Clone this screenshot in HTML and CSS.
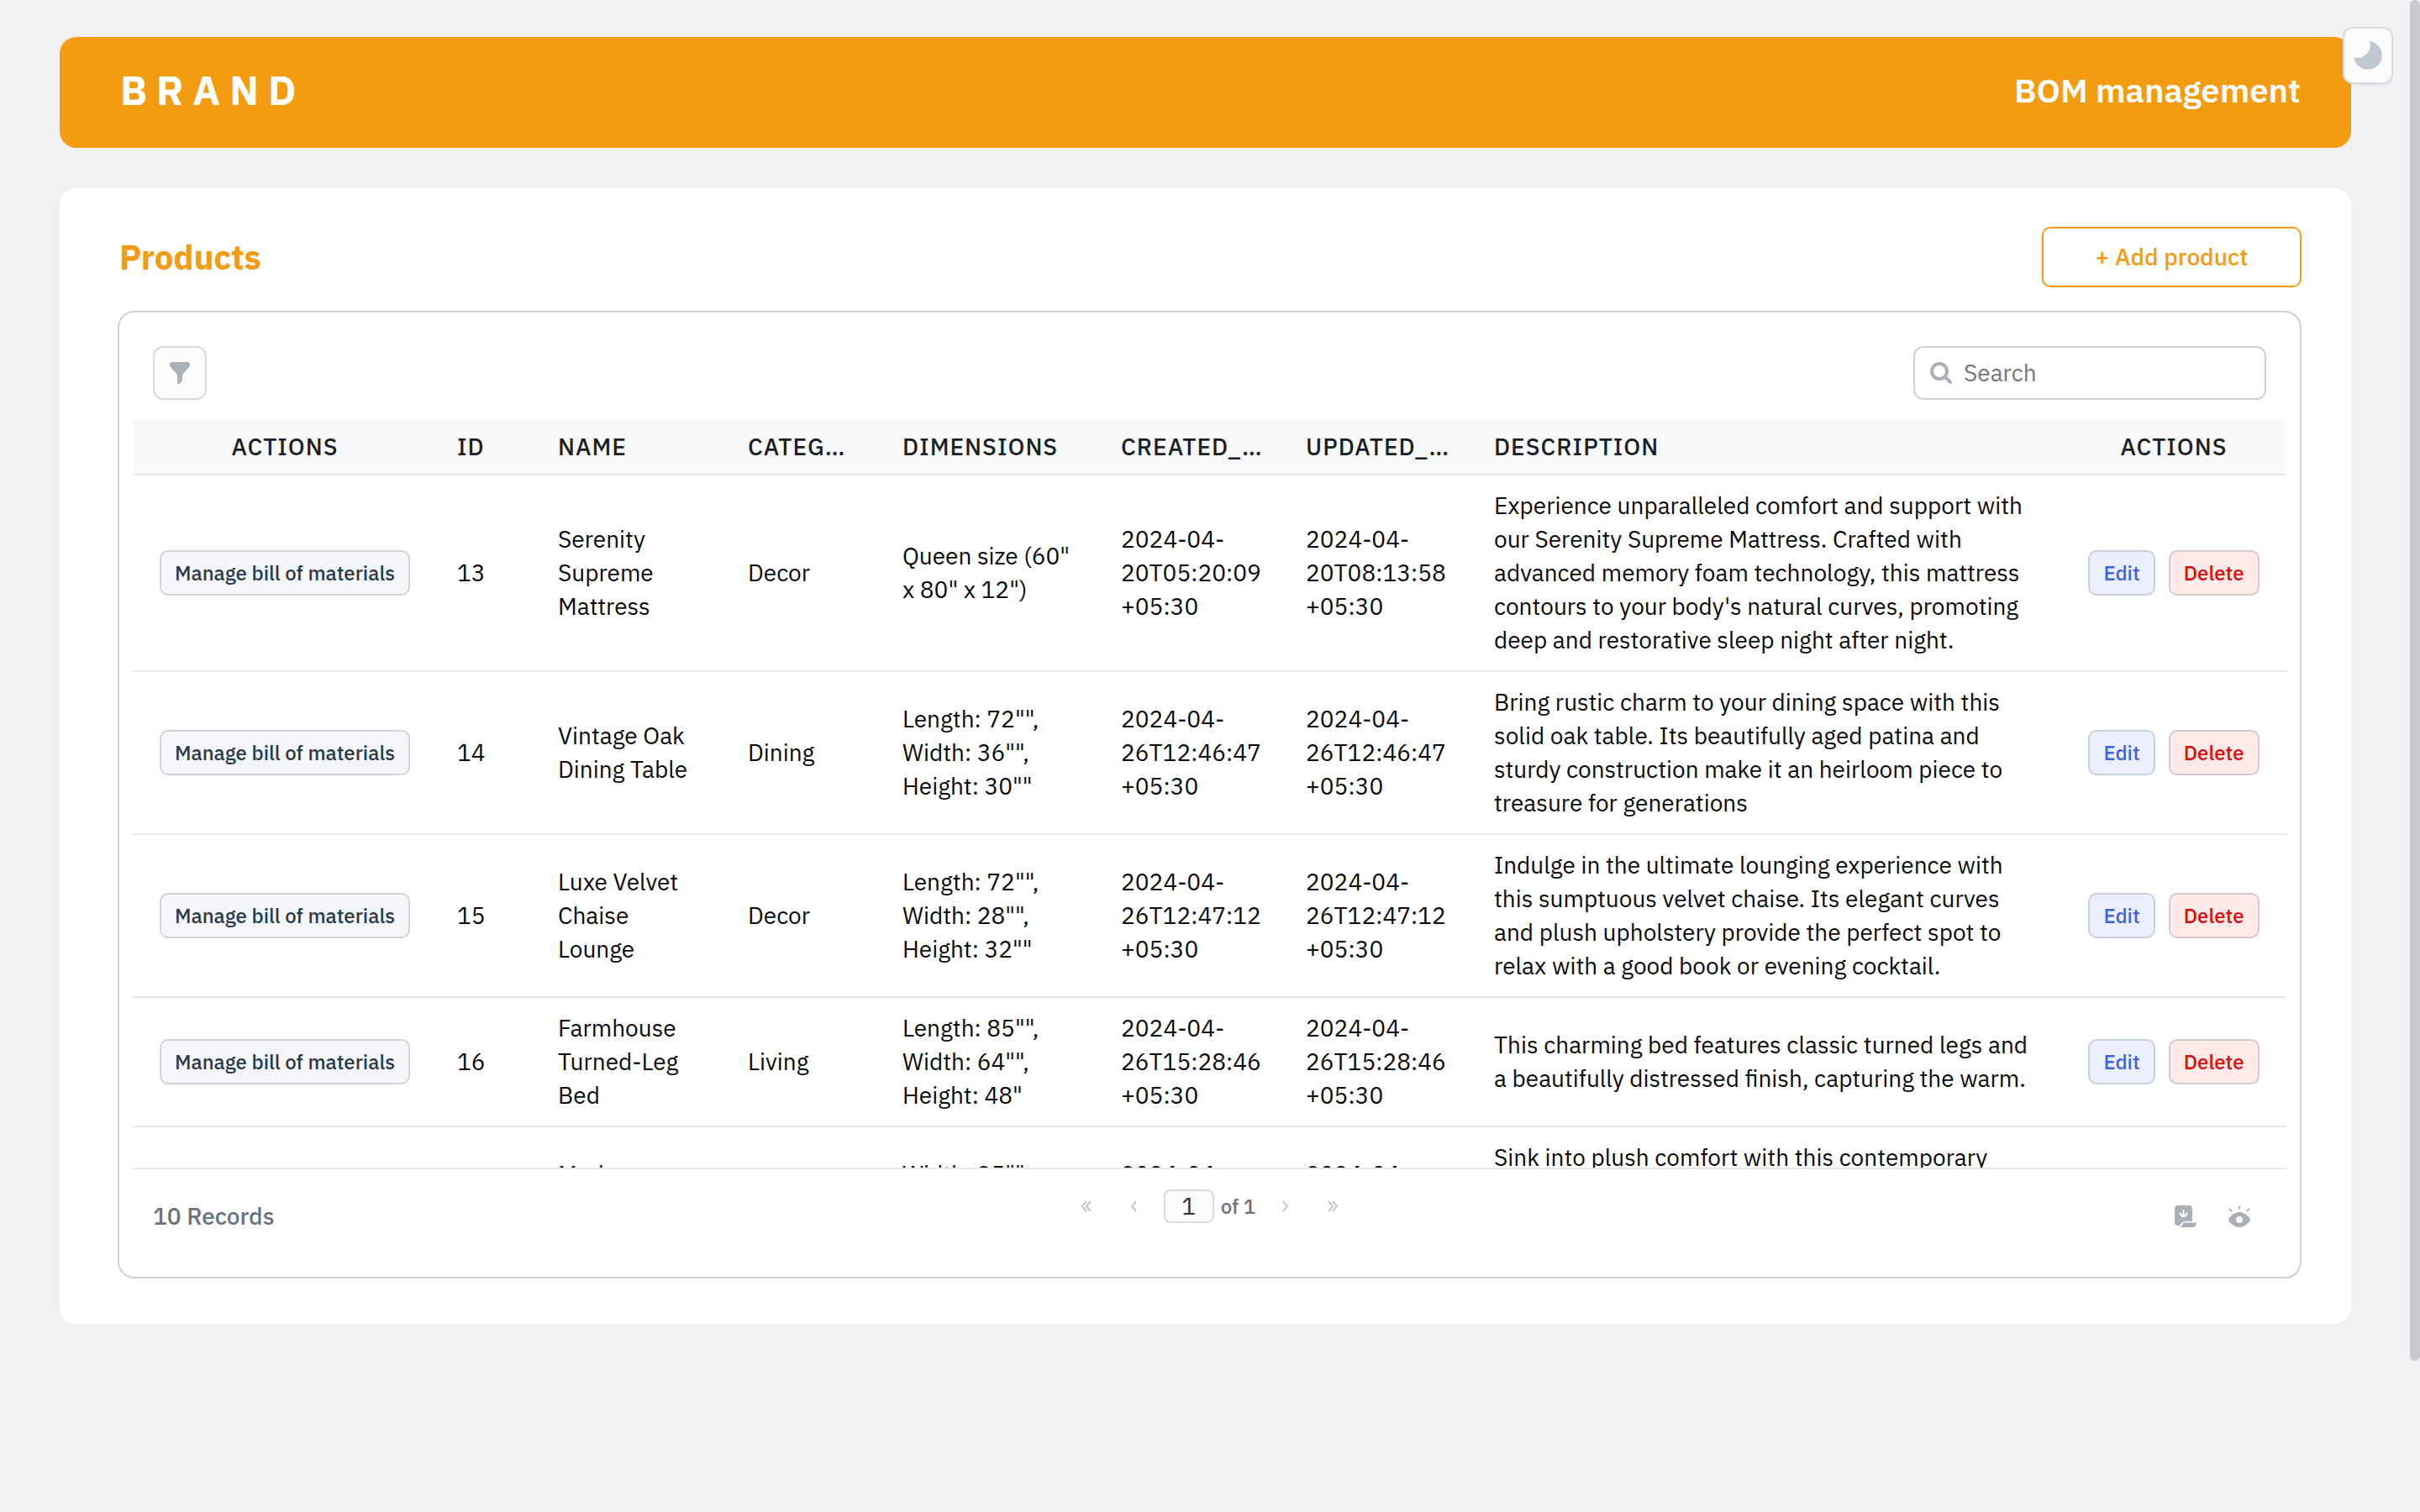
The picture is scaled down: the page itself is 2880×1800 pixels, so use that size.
FILE: index.html
```html
<!DOCTYPE html>
<html lang="en">
<head>
<meta charset="utf-8">
<meta name="viewport" content="width=device-width, initial-scale=1">
<title>BOM management</title>
<link rel="stylesheet" href="styles.css">
</head>
<body>
<div class="page">
  <header class="topbar">
    <span class="brand">BRAND</span>
    <h1 class="app-title">BOM management</h1>
  </header>

  <main class="card">
    <div class="card-head">
      <h2 class="card-title">Products</h2>
      <button type="button" class="add-button">+ Add product</button>
    </div>

    <section class="table-box" aria-label="Products table">
      <div class="toolbar">
        <button type="button" class="filter-button" aria-label="Filter">
          <svg width="26" height="28" viewBox="0 0 26 28" aria-hidden="true"><path fill="#a9b0b8" d="M4 1H22Q25 1 25 4V5Q25 6 24 7L17 15Q16 16 16 18V23L13 26.500Q10 28 10 25V18Q10 16 9 15L2 7Q1 6 1 5V4Q1 1 4 1Z"/></svg>
        </button>
        <label class="search">
          <svg width="26" height="26" viewBox="0 0 26 26" fill="none" stroke="#a9b0b8" stroke-width="4" stroke-linecap="round" aria-hidden="true"><circle cx="11" cy="11" r="9"/><path d="M18 18L24 24"/></svg>
          <input type="search" placeholder="Search" aria-label="Search">
        </label>
      </div>

      <div class="table-scroll">
        <table class="products">
          <colgroup>
            <col class="col-manage"><col class="col-id"><col class="col-name"><col class="col-category"><col class="col-dimensions"><col class="col-created"><col class="col-updated"><col><col class="col-actions">
          </colgroup>
          <thead>
            <tr>
              <th scope="col" class="center">ACTIONS</th>
              <th scope="col">ID</th>
              <th scope="col">NAME</th>
              <th scope="col">CATEGORY</th>
              <th scope="col">DIMENSIONS</th>
              <th scope="col">CREATED_AT</th>
              <th scope="col">UPDATED_AT</th>
              <th scope="col">DESCRIPTION</th>
              <th scope="col" class="center">ACTIONS</th>
            </tr>
          </thead>
          <tbody>
            <tr>
              <td class="center"><button type="button" class="chip">Manage bill of materials</button></td>
              <td>13</td>
              <td>Serenity Supreme Mattress</td>
              <td>Decor</td>
              <td>Queen size (60" x 80" x 12")</td>
              <td>2024-04-<wbr>20T05:20:09<wbr>+05:30</td>
              <td>2024-04-<wbr>20T08:13:58<wbr>+05:30</td>
              <td>Experience unparalleled comfort and support with our Serenity Supreme Mattress. Crafted with advanced memory foam technology, this mattress contours to your body's natural curves, promoting deep and restorative sleep night after night.</td>
              <td><div class="row-actions"><button type="button" class="chip edit">Edit</button><button type="button" class="chip delete">Delete</button></div></td>
            </tr>
            <tr>
              <td class="center"><button type="button" class="chip">Manage bill of materials</button></td>
              <td>14</td>
              <td>Vintage Oak Dining Table</td>
              <td>Dining</td>
              <td>Length: 72"", Width: 36"", Height: 30""</td>
              <td>2024-04-<wbr>26T12:46:47<wbr>+05:30</td>
              <td>2024-04-<wbr>26T12:46:47<wbr>+05:30</td>
              <td>Bring rustic charm to your dining space with this solid oak table. Its beautifully aged patina and sturdy construction make it an heirloom piece to treasure for generations</td>
              <td><div class="row-actions"><button type="button" class="chip edit">Edit</button><button type="button" class="chip delete">Delete</button></div></td>
            </tr>
            <tr>
              <td class="center"><button type="button" class="chip">Manage bill of materials</button></td>
              <td>15</td>
              <td>Luxe Velvet Chaise Lounge</td>
              <td>Decor</td>
              <td>Length: 72"", Width: 28"", Height: 32""</td>
              <td>2024-04-<wbr>26T12:47:12<wbr>+05:30</td>
              <td>2024-04-<wbr>26T12:47:12<wbr>+05:30</td>
              <td>Indulge in the ultimate lounging experience with this sumptuous velvet chaise. Its elegant curves and plush upholstery provide the perfect spot to relax with a good book or evening cocktail.</td>
              <td><div class="row-actions"><button type="button" class="chip edit">Edit</button><button type="button" class="chip delete">Delete</button></div></td>
            </tr>
            <tr>
              <td class="center"><button type="button" class="chip">Manage bill of materials</button></td>
              <td>16</td>
              <td>Farmhouse Turned-Leg Bed</td>
              <td>Living</td>
              <td>Length: 85"", Width: 64"", Height: 48"</td>
              <td>2024-04-<wbr>26T15:28:46<wbr>+05:30</td>
              <td>2024-04-<wbr>26T15:28:46<wbr>+05:30</td>
              <td>This charming bed features classic turned legs and a beautifully distressed finish, capturing the warm.</td>
              <td><div class="row-actions"><button type="button" class="chip edit">Edit</button><button type="button" class="chip delete">Delete</button></div></td>
            </tr>
            <tr>
              <td class="center"><button type="button" class="chip">Manage bill of materials</button></td>
              <td>17</td>
              <td>Modern Sectional Sofa</td>
              <td>Living</td>
              <td>Width: 35"", Length: 90"", Height: 34""</td>
              <td>2024-04-<wbr>26T15:30:12<wbr>+05:30</td>
              <td>2024-04-<wbr>26T15:30:12<wbr>+05:30</td>
              <td>Sink into plush comfort with this contemporary sectional sofa. Its clean lines and deep cushions make it an inviting centerpiece for any room, perfect for relaxing with family and friends.</td>
              <td><div class="row-actions"><button type="button" class="chip edit">Edit</button><button type="button" class="chip delete">Delete</button></div></td>
            </tr>
          </tbody>
        </table>
      </div>

      <footer class="table-foot">
        <span class="records">10 Records</span>
        <nav class="pager" aria-label="Pagination">
          <button type="button" class="pager-button" aria-label="First page" disabled><svg width="16" height="16" viewBox="0 0 16 16" aria-hidden="true"><path d="M8 2L3 8L8 14M13 2L8 8L13 14"/></svg></button>
          <button type="button" class="pager-button" aria-label="Previous page" disabled><svg width="16" height="16" viewBox="0 0 16 16" aria-hidden="true"><path d="M11 2L6 8L11 14"/></svg></button>
          <input class="pager-input" type="text" value="1" aria-label="Page number">
          <span class="pager-total">of 1</span>
          <button type="button" class="pager-button" aria-label="Next page" disabled><svg width="16" height="16" viewBox="0 0 16 16" aria-hidden="true"><path d="M5 2L10 8L5 14"/></svg></button>
          <button type="button" class="pager-button" aria-label="Last page" disabled><svg width="16" height="16" viewBox="0 0 16 16" aria-hidden="true"><path d="M3 2L8 8L3 14M8 2L13 8L8 14"/></svg></button>
        </nav>
        <div class="foot-tools">
          <button type="button" class="icon-button" aria-label="Download">
            <svg width="28" height="28" viewBox="0 0 28 28" aria-hidden="true"><path fill="#a9b0b8" d="M5 1H18Q22 1 22 5V20H13Q10 20 9 22.500Q8 25 5 25Q1 25 1 21V5Q1 1 5 1ZM12 21.500H27Q26.500 27 22 27H7.500Q9.500 26 10.500 23.500Q11 21.500 12 21.500Z"/><path d="M11.500 7V14M7.500 10.500Q8.500 14 11.500 14Q14.500 14 15.500 10.500" fill="none" stroke="#fff" stroke-width="2" stroke-linecap="round"/></svg>
          </button>
          <button type="button" class="icon-button" aria-label="Show or hide columns">
            <svg width="28" height="28" viewBox="0 0 28 28" aria-hidden="true"><path fill="#a9b0b8" fill-rule="evenodd" d="M1 18Q1 16 4 13.500Q9 9 14 9Q19 9 24 13.500Q27 16 27 18Q27 20 24 22.500Q19 27 14 27Q9 27 4 22.500Q1 20 1 18ZM14 14A4 4 0 1 0 14 22A4 4 0 1 0 14 14Z"/><path d="M14 2.500V4.500M2.500 5.500L4.500 7.500M25.500 5.500L23.500 7.500" fill="none" stroke="#a9b0b8" stroke-width="2" stroke-linecap="round"/></svg>
          </button>
        </div>
      </footer>
    </section>
  </main>
</div>

<button type="button" class="theme-toggle" aria-label="Switch to dark theme">
  <svg width="36" height="36" viewBox="0 0 36 36" aria-hidden="true"><path fill="#c1c7ce" d="M20 1A17 17 0 1 1 1 20A15 15 0 0 0 20 1Z"/></svg>
</button>
<div class="scroll-thumb" aria-hidden="true"></div>
</body>
</html>
```
FILE: styles.css
```css
:root {
  --orange: #f39c12;
  --border: #ccd1d5;
  --border-soft: #d7dbdf;
  --line: #e6e8ea;
  --muted: #6a727c;
}

* {
  box-sizing: border-box;
}

body {
  margin: 0;
  min-height: 100vh;
  background: #f1f1f4;
  color: #0a0a0a;
  font-family: "IBM Plex Sans", Roboto, "Liberation Sans", sans-serif;
  font-size: 28px;
  line-height: 40px;
}

button,
input {
  font: inherit;
  color: inherit;
}

button {
  cursor: pointer;
}

svg {
  display: block;
}

.page {
  display: flex;
  flex-direction: column;
  gap: 48px;
  padding: 44px 82px 44px 71px;
}

.topbar {
  display: flex;
  align-items: center;
  justify-content: space-between;
  height: 132px;
  padding: 0 60px 6px 72px;
  border-radius: 20px;
  background: var(--orange);
  color: #fff;
}

.brand {
  font-size: 48px;
  font-weight: 700;
  letter-spacing: 11px;
}

.app-title {
  margin: 0;
  font-size: 40px;
  font-weight: 600;
}

.card {
  padding: 46px 59px 54px 69px;
  border-radius: 20px;
  background: #fff;
}

.card-head {
  display: flex;
  align-items: center;
  justify-content: space-between;
  margin-bottom: 28px;
  padding-left: 2px;
}

.card-title {
  margin: 0;
  font-size: 40px;
  font-weight: 700;
  color: var(--orange);
}

.add-button {
  width: 309px;
  height: 72px;
  border: 2px solid var(--orange);
  border-radius: 10px;
  background: #fff;
  color: var(--orange);
  font-weight: 500;
}

.table-box {
  padding: 0 16px;
  border: 2px solid var(--border);
  border-radius: 20px;
}

.toolbar {
  display: flex;
  justify-content: space-between;
  padding: 40px 24px 24px;
}

.filter-button {
  display: grid;
  place-items: center;
  width: 64px;
  height: 64px;
  padding: 0;
  border: 2px solid var(--border-soft);
  border-radius: 12px;
  background: #fcfcfd;
}

.search {
  display: flex;
  align-items: center;
  gap: 14px;
  width: 420px;
  height: 64px;
  padding: 0 18px;
  border: 2px solid var(--border);
  border-radius: 12px;
  background: #fff;
}

.search input {
  flex: 1;
  min-width: 0;
  padding: 0;
  border: 0;
  outline: 0;
  background: none;
}

.search input::placeholder {
  color: #757575;
}

.table-scroll {
  height: 892px;
  overflow-y: auto;
  scrollbar-width: none;
  border-bottom: 2px solid var(--line);
}

.products {
  width: 100%;
  table-layout: fixed;
  border-collapse: separate;
  border-spacing: 0;
}

.col-manage { width: 362px; }
.col-id { width: 120px; }
.col-name { width: 226px; }
.col-category { width: 184px; }
.col-dimensions { width: 260px; }
.col-created { width: 220px; }
.col-updated { width: 224px; }
.col-actions { width: 268px; }

.products th {
  position: sticky;
  top: 0;
  height: 66px;
  padding: 0 24px;
  overflow: hidden;
  border-bottom: 2px solid var(--line);
  background: #f6f8fa;
  color: #1b1f24;
  font-weight: 500;
  letter-spacing: 1px;
  text-align: left;
  text-overflow: ellipsis;
  white-space: nowrap;
}

.products td {
  padding: 16px 24px;
  border-bottom: 2px solid var(--line);
  vertical-align: middle;
}

.products .center {
  text-align: center;
}

.chip {
  height: 54px;
  padding: 0 16px;
  border: 2px solid #d0d4da;
  border-radius: 10px;
  background: #f4f6fa;
  color: #2b3a48;
  font-size: 24px;
  font-weight: 500;
  white-space: nowrap;
  vertical-align: middle;
}

.chip.edit {
  border-color: #c8cfdd;
  background: #ebeffc;
  color: #3e63dd;
}

.chip.delete {
  border-color: #d9c8ca;
  background: #ffe9e9;
  color: #db0c0c;
}

.row-actions {
  display: flex;
  justify-content: center;
  gap: 16px;
}

.table-foot {
  display: grid;
  grid-template-columns: 1fr auto 1fr;
  align-items: start;
  padding: 24px 24px 40px;
}

.records {
  color: var(--muted);
  font-weight: 500;
  line-height: 64px;
}

.pager {
  display: flex;
  align-items: center;
  height: 40px;
}

.pager-button {
  display: grid;
  place-items: center;
  width: 56px;
  height: 40px;
  padding: 0;
  border: 0;
  background: none;
}

.pager-button path {
  fill: none;
  stroke: #c1c7cd;
  stroke-width: 2;
}

.pager-input {
  width: 60px;
  height: 40px;
  margin-left: 8px;
  padding: 0;
  border: 2px solid var(--border-soft);
  border-radius: 8px;
  background: #fcfcfd;
  color: #2b2f36;
  text-align: center;
}

.pager-total {
  margin: 0 8px;
  color: var(--muted);
  font-size: 24px;
  font-weight: 500;
}

.foot-tools {
  display: flex;
  justify-content: flex-end;
}

.icon-button {
  display: grid;
  place-items: center;
  width: 64px;
  height: 64px;
  padding: 0;
  border: 0;
  background: none;
}

.theme-toggle {
  position: fixed;
  top: 32px;
  right: 32px;
  display: grid;
  place-items: center;
  width: 60px;
  height: 68px;
  padding: 0;
  border: 2px solid var(--border-soft);
  border-radius: 12px;
  background: #fcfcfd;
  box-shadow: 0 2px 2px rgba(16, 24, 40, 0.05);
}

.scroll-thumb {
  position: fixed;
  top: 0;
  right: 0;
  width: 12px;
  height: 90vh;
  border-radius: 6px;
  background: #c9cacf;
}
```
